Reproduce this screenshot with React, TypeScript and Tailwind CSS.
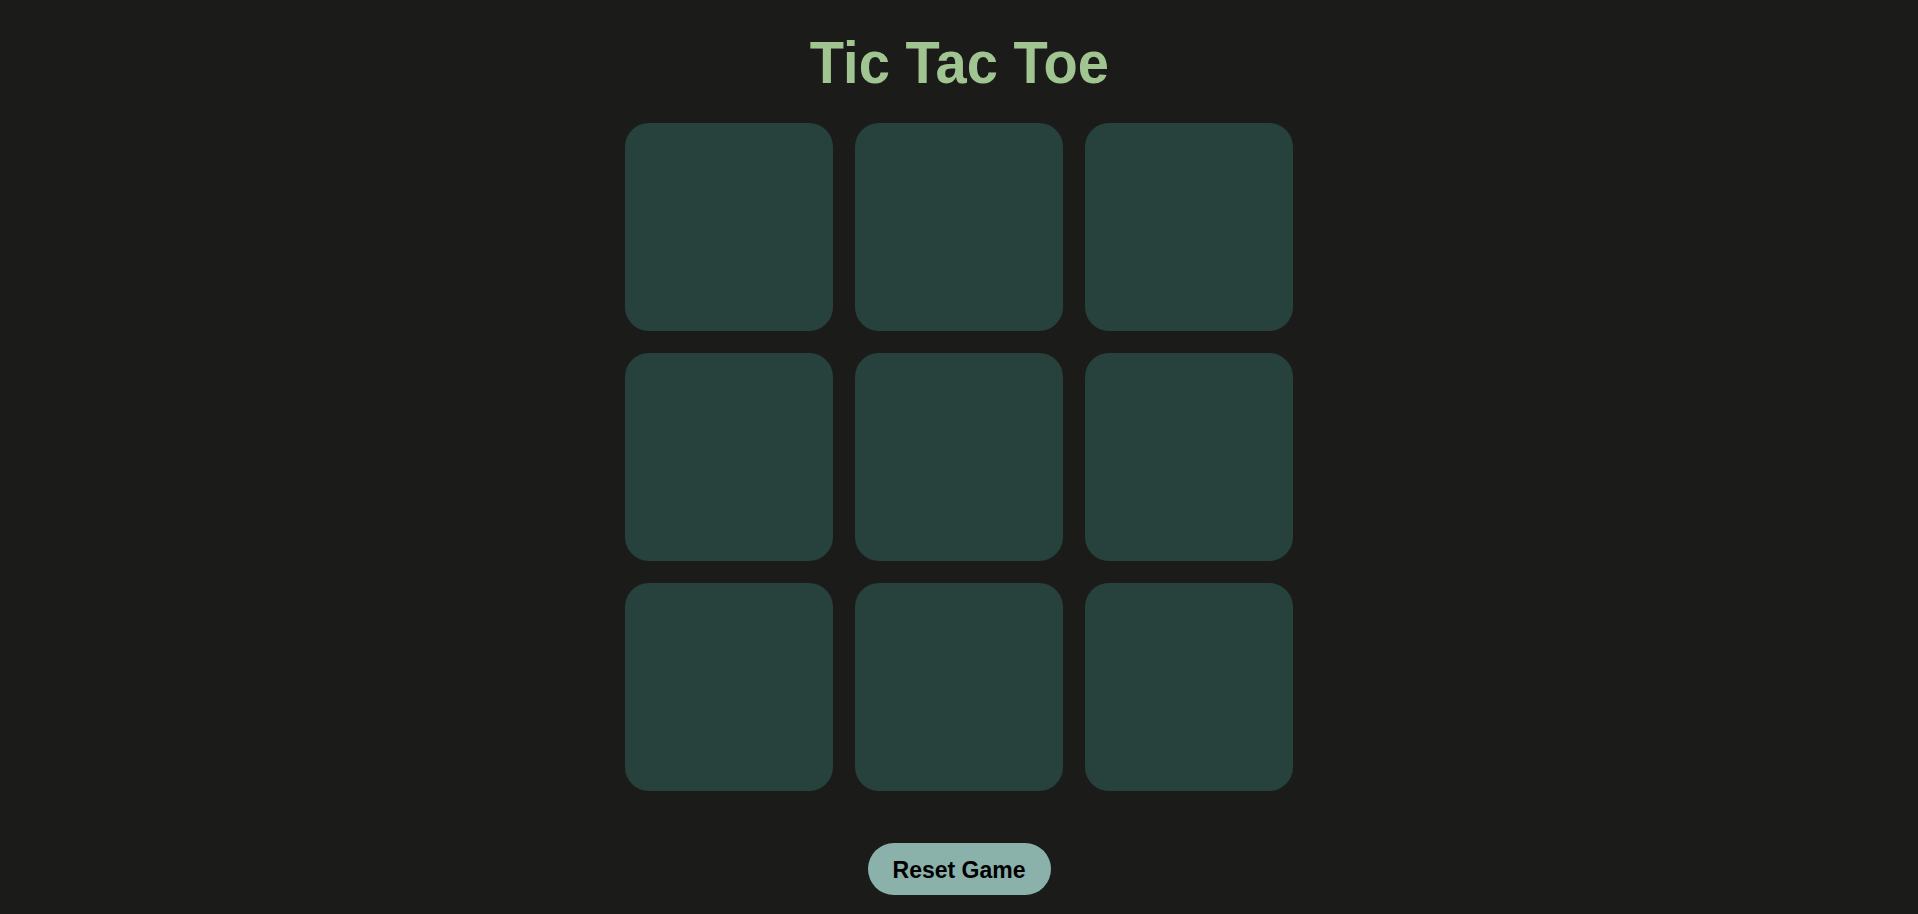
export default function App() {
  const cells = Array.from({ length: 9 }, (_, i) => i);
  return (
    <div className="min-h-[914px] w-full bg-[#1b1c1a] flex flex-col items-center pt-[34px]" style={{ fontFamily: '"Liberation Sans", Arial, sans-serif' }}>
      <h1 className="text-[59px] leading-[58px] font-bold text-[#a0c590] scale-x-[0.95] whitespace-nowrap">
        Tic Tac Toe
      </h1>
      <div className="mt-[31px] grid grid-cols-[repeat(3,208px)] gap-[22px]">
        {cells.map((i) => (
          <button key={i} className="w-[208px] h-[208px] rounded-[24px] bg-[#27423d]" aria-label={`cell ${i + 1}`} />
        ))}
      </div>
      <button className="mt-[52px] h-[52px] w-[183px] rounded-full bg-[#8ab2ab] text-black font-bold text-[23px] leading-[24px] pt-[2px]">
        Reset Game
      </button>
    </div>
  );
}
